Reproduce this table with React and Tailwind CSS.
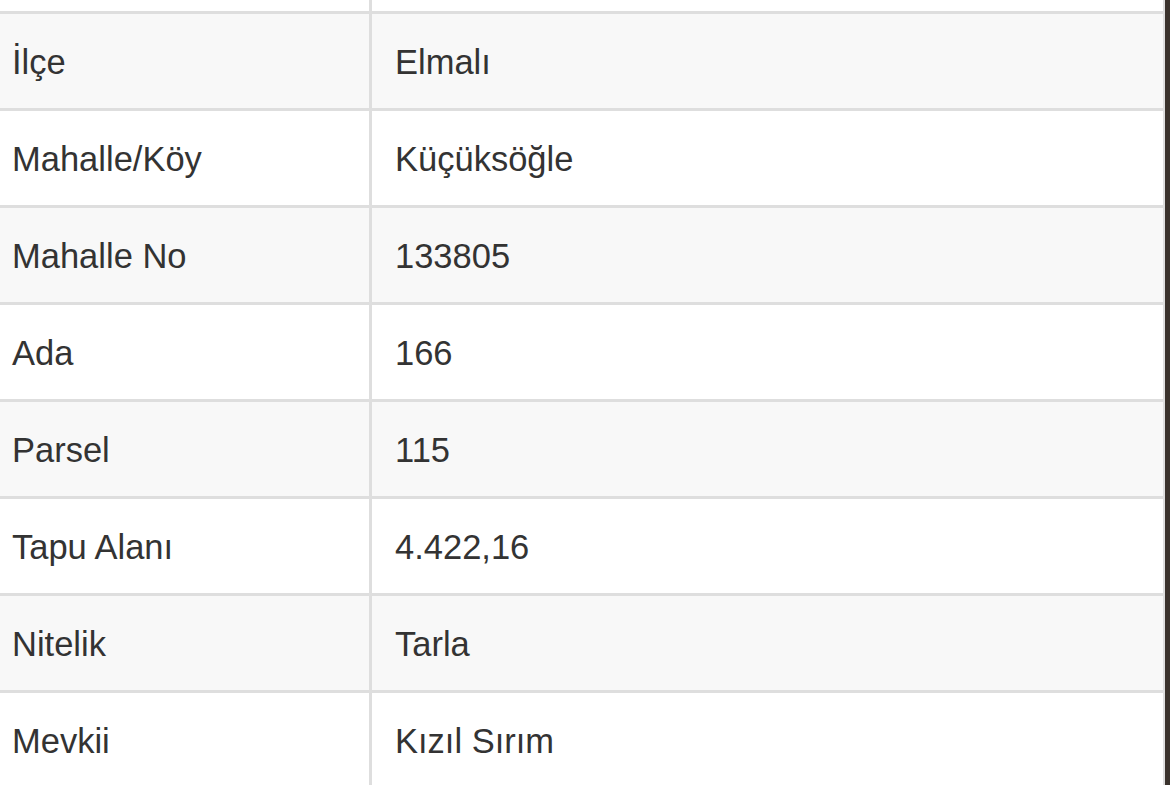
import React from 'react';

const satirlar = [
  { etiket: 'İlçe', deger: 'Elmalı' },
  { etiket: 'Mahalle/Köy', deger: 'Küçüksöğle' },
  { etiket: 'Mahalle No', deger: '133805' },
  { etiket: 'Ada', deger: '166' },
  { etiket: 'Parsel', deger: '115' },
  { etiket: 'Tapu Alanı', deger: '4.422,16' },
  { etiket: 'Nitelik', deger: 'Tarla' },
  { etiket: 'Mevkii', deger: 'Kızıl Sırım' },
];

const App = () => {
  return (
    <div
      className="w-[1170px] h-[785px] overflow-hidden bg-white flex text-[#333333]"
      style={{ fontFamily: '"Liberation Sans", Arial, sans-serif' }}
    >
      <div className="flex-1 flex flex-col">
        {/* Üstte kesilmiş satır */}
        <div className="flex h-[11px] shrink-0 bg-white">
          <div className="w-[369px] shrink-0"></div>
          <div className="w-[3px] bg-[#dedede]"></div>
          <div className="flex-1"></div>
        </div>

        {satirlar.map((satir, i) => (
          <div
            key={satir.etiket}
            className={`flex h-[97px] shrink-0 border-t-[3px] border-[#dedede] ${i % 2 === 0 ? 'bg-[#f8f8f8]' : 'bg-white'}`}
          >
            <div className="w-[369px] shrink-0 flex items-center pl-[12px] pt-[2px] text-[34.5px] leading-none">
              {satir.etiket}
            </div>
            <div className="w-[3px] bg-[#dedede]"></div>
            <div className="flex-1 flex items-center pl-[23px] pt-[2px] text-[34.5px] leading-none">
              {satir.deger}
            </div>
          </div>
        ))}
      </div>
      <div className="w-[2px] bg-[#dedede] shrink-0"></div>
      <div className="w-[5px] bg-[#3a322c] shrink-0"></div>
    </div>
  );
};

export default App;
